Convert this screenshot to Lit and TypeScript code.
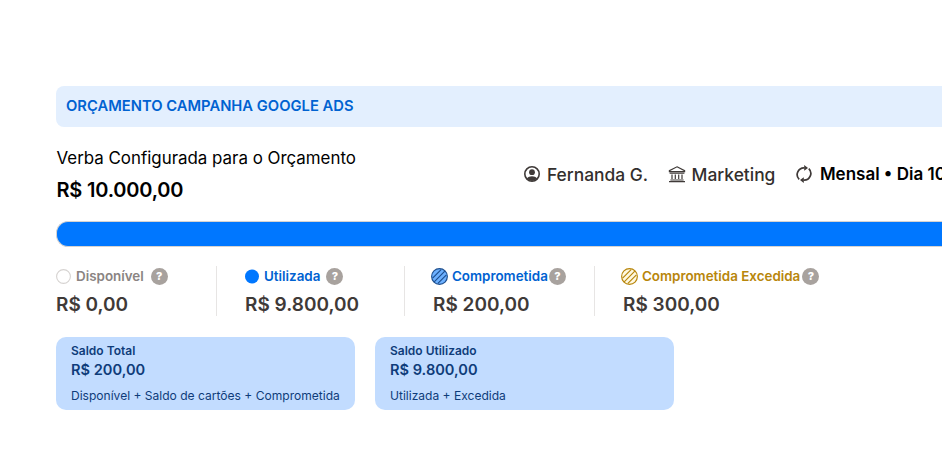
import { LitElement, css, html, svg } from 'lit'
import { customElement } from 'lit/decorators.js'

type Legend = 'empty' | 'solid' | 'blue' | 'gold'

const stats: { label: string; value: string; kind: Legend; tone: string }[] = [
  { label: 'Disponível', value: 'R$ 0,00', kind: 'empty', tone: 'grey' },
  { label: 'Utilizada', value: 'R$ 9.800,00', kind: 'solid', tone: 'blue' },
  { label: 'Comprometida', value: 'R$ 200,00', kind: 'blue', tone: 'blue' },
  { label: 'Comprometida Excedida', value: 'R$ 300,00', kind: 'gold', tone: 'gold' },
]

const hatch = (bg: string, line: string, border: string) => svg`
  <svg class="legend hatch" width="17" height="17" viewBox="0 0 16 16" fill="none">
    <circle cx="8" cy="8" r="7.4" fill=${bg} />
    <path d="M1.5 9.5 9.5 1.5M3 13 13 3M6.5 14.5 14.5 6.5" stroke=${line} stroke-width="1.1" />
    <circle cx="8" cy="8" r="7.4" stroke=${border} stroke-width="1.1" />
  </svg>`

const legendIcon = (kind: Legend) => {
  if (kind === 'empty') return html`<svg class="legend" width="15" height="15" viewBox="0 0 15 15" fill="none"><circle cx="7.5" cy="7.5" r="6.9" fill="#fff" stroke="#d6d3d1" stroke-width="1.1" /></svg>`
  if (kind === 'solid') return html`<svg class="legend" width="15" height="15" viewBox="0 0 15 15"><circle cx="7" cy="7.5" r="7" fill="#0077ff" /></svg>`
  if (kind === 'blue') return hatch('#6cb0ff', '#1d4f8f', '#1d4f8f')
  return hatch('#fff8e0', '#b8860b', '#b8860b')
}

@customElement('app-root')
export class AppRoot extends LitElement {
  render() {
    return html`
      <div class="page">
        <div class="banner">ORÇAMENTO CAMPANHA GOOGLE ADS</div>

        <div class="summary">
          <div class="budget">
            <div class="budget-label">Verba Configurada para o Orçamento</div>
            <div class="budget-value">R$ 10.000,00</div>
          </div>
          <div class="meta">
            <span class="meta-item">
              <svg width="18" height="18" viewBox="0 0 18 18" fill="none">
                <circle cx="9" cy="9" r="7.2" stroke="#3f3a38" stroke-width="1.6" />
                <circle cx="9" cy="7.2" r="2.9" fill="#3f3a38" />
                <path d="M3.8 13.6c1.2-1.7 3-2.4 5.2-2.4s4 .7 5.2 2.4A7 7 0 0 1 9 16a7 7 0 0 1-5.2-2.4Z" fill="#3f3a38" />
              </svg>
              Fernanda G.
            </span>
            <span class="meta-item">
              <svg width="18" height="18" viewBox="0 0 18 18" fill="none" stroke="#3f3a38">
                <path d="M9 1.8 16.6 5.6v1H1.4v-1L9 1.8Z" stroke-width="1.2" />
                <path d="M1.6 8.2h14.8M4 9.4v4.6M7.3 9.4v4.6M10.7 9.4v4.6M14 9.4v4.6M2.4 15h13.2M1 16.6h16" stroke-width="1.2" />
              </svg>
              Marketing
            </span>
            <span class="meta-item strong">
              <svg width="18" height="18" viewBox="0 0 18 18" fill="none" stroke="#3f3a38" stroke-width="1.7">
                <path d="M4.2 14.4A6.8 6.8 0 0 1 9.4 2.8" />
                <path d="M13.8 3.6A6.8 6.8 0 0 1 8.6 15.2" />
                <path d="M9.2 0v5.8l3.8-2.9Z" fill="#3f3a38" stroke="none" />
                <path d="M8.8 18v-5.8L5 15.1Z" fill="#3f3a38" stroke="none" />
              </svg>
              Mensal • Dia 10
            </span>
          </div>
        </div>

        <div class="bar"></div>

        <div class="stats">
          ${stats.map(
            (s) => html`
              <div class="stat">
                <div class="stat-head ${s.kind}">
                  ${legendIcon(s.kind)}
                  <span class="stat-label ${s.tone}">${s.label}</span>
                  <span class="help">?</span>
                </div>
                <div class="stat-value">${s.value}</div>
              </div>
            `
          )}
        </div>

        <div class="cards">
          <div class="card">
            <div class="card-title">Saldo Total</div>
            <div class="card-value">R$ 200,00</div>
            <div class="card-note">Disponível + Saldo de cartões + Comprometida</div>
          </div>
          <div class="card">
            <div class="card-title">Saldo Utilizado</div>
            <div class="card-value">R$ 9.800,00</div>
            <div class="card-note">Utilizada + Excedida</div>
          </div>
        </div>
      </div>
    `
  }

  static styles = css`
    :host {
      display: block;
      width: 942px;
      height: 456px;
      overflow: hidden;
      background: #fff;
      font-family: Inter, sans-serif;
      color: #000;
    }

    .page {
      width: 1000px;
      padding: 86px 0 0 56px;
    }

    .banner {
      height: 41px;
      box-sizing: border-box;
      padding: 0 10px 1px;
      display: flex;
      align-items: center;
      background: #e3effe;
      border-radius: 8px;
      color: #0062d1;
      font-size: 14.75px;
      font-weight: 600;
    }

    .summary {
      display: flex;
      align-items: center;
      margin-top: 20px;
      padding-left: 0.5px;
    }

    .budget-label {
      font-size: 16.9px;
      line-height: 23px;
    }

    .budget-value {
      margin-top: 8px;
      font-size: 20px;
      letter-spacing: -0.2px;
      line-height: 24px;
      font-weight: 600;
    }

    .meta {
      display: flex;
      gap: 19.5px;
      margin-left: 167px;
      white-space: nowrap;
      margin-top: -1px;
    }

    .meta-item {
      display: flex;
      align-items: center;
      gap: 6px;
      font-size: 17.4px;
      font-weight: 500;
      color: #332f2d;
    }

    .meta-item.strong {
      gap: 7px;
      font-size: 17px;
      font-weight: 600;
      color: #000;
    }

    .bar {
      height: 24px;
      margin-top: 19px;
      background: #0077ff;
      border: 1px solid #d6d3d1;
      border-right: none;
      border-radius: 12px 0 0 12px;
    }

    .stats {
      display: flex;
      margin-top: 19px;
    }

    .stat {
      width: 190px;
      box-sizing: border-box;
      height: 50px;
      padding-left: 28px;
      border-left: 1px solid #e7e5e4;
      white-space: nowrap;
    }

    .stat:first-child {
      width: 160px;
      padding-left: 0;
      border-left: none;
    }

    .stat:nth-child(2) {
      width: 188px;
    }

    .stat-head {
      display: flex;
      align-items: center;
      gap: 5px;
      height: 20px;
    }

    .stat-head.solid {
      gap: 4px;
    }

    .stat-head.blue,
    .stat-head.gold {
      gap: 4px;
      margin-left: -2px;
    }

    .legend {
      flex-shrink: 0;
    }

    .stat-label {
      font-size: 13.4px;
      font-weight: 600;
    }

    .stat-label.grey {
      color: #8a8482;
    }

    .stat-label.blue {
      color: #0062d1;
    }

    .stat-label.gold {
      color: #b8860b;
    }

    .help {
      flex-shrink: 0;
      width: 17px;
      height: 17px;
      margin-left: 2px;
      border-radius: 50%;
      background: #a8a29e;
      color: #fff;
      display: flex;
      align-items: center;
      justify-content: center;
      font-size: 11px;
      font-weight: 800;
    }

    .stat-head.blue .help {
      margin-left: -3px;
    }

    .stat-head.gold .help {
      margin-left: -2px;
    }

    .stat-value {
      margin-top: 7px;
      font-size: 19px;
      line-height: 24px;
      font-weight: 600;
      color: #3f3a38;
    }

    .cards {
      display: flex;
      gap: 20px;
      margin-top: 21px;
    }

    .card {
      width: 299px;
      height: 73px;
      box-sizing: border-box;
      padding: 6px 15px;
      background: #c2dcff;
      border-radius: 10px;
      color: #0f3c7a;
    }

    .card-title {
      font-size: 12px;
      line-height: 16px;
      font-weight: 600;
    }

    .card-value {
      margin-top: 2px;
      font-size: 14.6px;
      line-height: 18px;
      font-weight: 600;
    }

    .card-note {
      margin-top: 9px;
      font-size: 12.05px;
      line-height: 16px;
    }
  `
}
